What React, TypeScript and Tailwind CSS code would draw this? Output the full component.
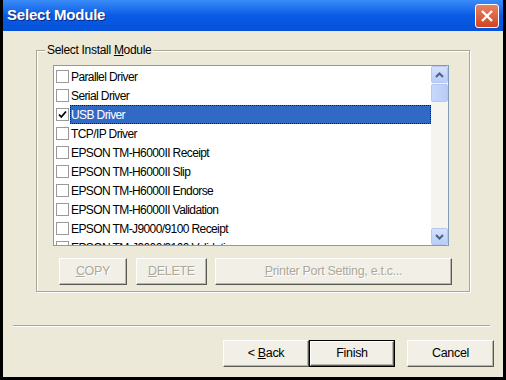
import React from 'react';

const items = [
  'Parallel Driver',
  'Serial Driver',
  'USB Driver',
  'TCP/IP Driver',
  'EPSON TM-H6000II Receipt',
  'EPSON TM-H6000II Slip',
  'EPSON TM-H6000II Endorse',
  'EPSON TM-H6000II Validation',
  'EPSON TM-J9000/9100 Receipt',
  'EPSON TM-J9000/9100 Validation',
];

const font = { fontFamily: '"Liberation Sans", Arial, sans-serif' };

function Btn({
  children,
  w,
  disabled,
  isDefault,
}: {
  children: React.ReactNode;
  w: string;
  disabled?: boolean;
  isDefault?: boolean;
}) {
  return (
    <div
      className={`${w} h-[27px] ${isDefault ? 'border border-black' : ''} flex`}
    >
      <div
        className={`flex-1 flex items-center justify-center bg-[#f1efe6] border-t border-l border-white border-r border-b border-r-[#5a5a56] border-b-[#5a5a56] shadow-[inset_-1px_-1px_0_#b8b5a6] text-[12.5px] tracking-[-0.3px] ${
          disabled ? 'text-[#aca899] [text-shadow:1px_1px_0_#fff]' : 'text-black'
        }`}
      >
        {children}
      </div>
    </div>
  );
}

function Check({ checked }: { checked?: boolean }) {
  return (
    <div className="w-[13px] h-[13px] shrink-0 bg-white border border-[#9a9a9a] flex items-center justify-center">
      {checked && (
        <svg width="9" height="9" viewBox="0 0 9 9">
          <path d="M1 4.5 L3.3 7 L8 1.5" fill="none" stroke="#000" strokeWidth="1.8" />
        </svg>
      )}
    </div>
  );
}

function ScrollArrow({ up }: { up?: boolean }) {
  return (
    <div className="w-[17px] h-[17px] rounded-[2px] bg-gradient-to-b from-[#d6e2fd] to-[#b9cdf8] border border-[#b4c7f2] flex items-center justify-center">
      <svg width="9" height="6" viewBox="0 0 9 6">
        <path
          d={up ? 'M1 5 L4.5 1.5 L8 5' : 'M1 1 L4.5 4.5 L8 1'}
          fill="none"
          stroke="#4d6185"
          strokeWidth="2"
        />
      </svg>
    </div>
  );
}

export default function App() {
  return (
    <div
      className="w-[506px] h-[380px] border-x-[3px] border-b-[3px] border-black flex flex-col bg-[#ece9d8] overflow-hidden"
      style={font}
    >
      {/* Title bar */}
      <div className="h-[31px] shrink-0 bg-gradient-to-b from-[#3a8cf8] via-[#0a5ae6] to-[#0552d8] flex items-center justify-between pl-[4px] pr-[4px]">
        <span className="text-white font-bold text-[15px] tracking-[-0.2px] [text-shadow:1px_1px_0_#0a2a7a]">
          Select Module
        </span>
        <div className="w-[24px] h-[24px] rounded-[3px] border border-white bg-gradient-to-b from-[#e8825f] to-[#d2411e] flex items-center justify-center">
          <svg width="14" height="14" viewBox="0 0 14 14">
            <path d="M2 2 L12 12 M12 2 L2 12" stroke="#fff" strokeWidth="2.4" />
          </svg>
        </div>
      </div>

      {/* Body */}
      <div className="flex-1 flex flex-col">
        <div className="relative ml-[33px] mt-[19px] w-[434px] h-[242px] border border-[#a8a697] shadow-[1px_1px_0_#fff,inset_1px_1px_0_#fff]">
          <span className="absolute left-[8px] top-[-9px] bg-[#ece9d8] px-[2px] text-[12px] tracking-[-0.3px] leading-[16px] text-black">
            Select Install <span className="underline">M</span>odule
          </span>

          {/* List box */}
          <div className="ml-[16px] mt-[14px] w-[396px] h-[181px] border border-[#7f9db9] bg-white flex">
            <div className="flex-1 pt-[1px] overflow-hidden">
              {items.map((it, i) => (
                <div key={it} className="h-[19px] flex items-center pl-[2px]">
                  <Check checked={i === 2} />
                  <div
                    className={`ml-[1px] flex-1 h-[19px] flex items-center pl-[1px] text-[12px] tracking-[-0.6px] whitespace-nowrap ${
                      i === 2
                        ? 'bg-[#316ac5] text-white outline-1 outline-dotted outline-[#0a1a4a] -outline-offset-1'
                        : 'text-black'
                    }`}
                  >
                    {it}
                  </div>
                </div>
              ))}
            </div>
            <div className="w-[17px] bg-[#f5f4ef] flex flex-col">
              <ScrollArrow up />
              <div className="w-[17px] h-[18px] mt-[1px] rounded-[2px] bg-gradient-to-r from-[#c9d8fc] to-[#b8ccf6] border border-[#b4c7f2]" />
              <div className="flex-1" />
              <ScrollArrow />
            </div>
          </div>

          {/* Module buttons */}
          <div className="flex ml-[22px] mt-[12px]">
            <Btn w="w-[68px]" disabled>
              <span className="underline">C</span>OPY
            </Btn>
            <div className="w-[9px]" />
            <Btn w="w-[71px]" disabled>
              <span className="underline">D</span>ELETE
            </Btn>
            <div className="w-[8px]" />
            <Btn w="w-[237px]" disabled>
              <span className="underline">P</span>rinter Port Setting, e.t.c...
            </Btn>
          </div>
        </div>

        {/* Separator */}
        <div className="ml-[10px] mt-[33px] w-[477px] h-[2px] border-t border-[#aca899] border-b border-b-white" />

        {/* Dialog buttons */}
        <div className="flex justify-end mt-[13px] pr-[9px]">
          <Btn w="w-[86px]">
            &lt; <span className="underline ml-[3px]">B</span>ack
          </Btn>
          <Btn w="w-[86px]" isDefault>
            Finish
          </Btn>
          <div className="w-[12px]" />
          <Btn w="w-[87px]">Cancel</Btn>
        </div>
      </div>
    </div>
  );
}
